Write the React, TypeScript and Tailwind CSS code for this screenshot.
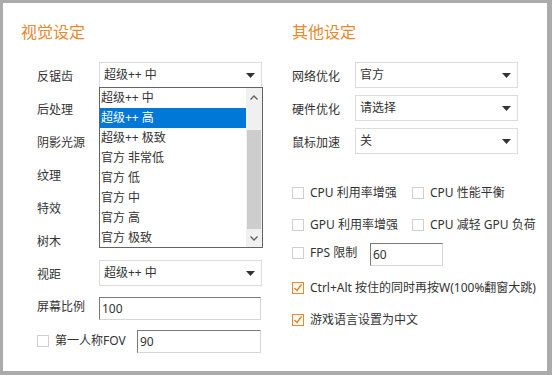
import React from 'react';

const font = { fontFamily: '"Noto Sans", "Noto Sans CJK SC", sans-serif' };

function Arrow() {
  return (
    <svg width="9" height="5" viewBox="0 0 9 5" className="absolute right-[6px] top-[10px]">
      <path d="M0 0 H9 L4.5 5 Z" fill="#333" />
    </svg>
  );
}

function Select({ value }: { value: string }) {
  return (
    <div className="relative h-[26px] w-[163px] border border-[#dcdcdc] bg-white pl-[4px] text-[12px] leading-[24px] text-[#333]">
      {value}
      <Arrow />
    </div>
  );
}

function TextBox({ value, w }: { value: string; w: string }) {
  return (
    <div
      className={`${w} h-[23px] border border-t-[#7a7a7a] border-l-[#7a7a7a] border-r-[#d6d6d6] border-b-[#d6d6d6] bg-white pl-[2px] text-[12px] leading-[22px] text-[#333]`}
    >
      {value}
    </div>
  );
}

function Check({ checked }: { checked?: boolean }) {
  return (
    <span
      className={`flex h-[12px] w-[12px] shrink-0 items-center justify-center border bg-white ${
        checked ? 'border-[#e8892c]' : 'border-[#cfcfcf]'
      }`}
    >
      {checked && (
        <svg width="10" height="10" viewBox="0 0 10 10">
          <path d="M1.5 5 L4 7.5 L8.5 1.5" fill="none" stroke="#e8892c" strokeWidth="1.6" />
        </svg>
      )}
    </span>
  );
}

function CheckLabel({ text, checked, w }: { text: string; checked?: boolean; w?: string }) {
  return (
    <div className={`flex items-center gap-[6px] ${w ?? ''}`}>
      <Check checked={checked} />
      <span className="whitespace-nowrap text-[12px] text-[#333]">{text}</span>
    </div>
  );
}

const leftRows = ['反锯齿', '后处理', '阴影光源', '纹理', '特效', '树木'];

const options = ['超级++ 中', '超级++ 高', '超级++ 极致', '官方 非常低', '官方 低', '官方 中', '官方 高', '官方 极致'];

function Dropdown() {
  return (
    <div className="absolute left-[78px] top-[29px] z-10 flex h-[161px] w-[164px] border border-[#646464] bg-white">
      <div className="flex-1">
        {options.map((o, i) => (
          <div
            key={o}
            className={`h-[20px] pl-[1px] text-[12px] leading-[20px] ${
              i === 1 ? 'bg-[#0078d7] text-white' : 'text-[#333]'
            }`}
          >
            {o}
          </div>
        ))}
      </div>
      <div className="flex w-[16px] flex-col bg-[#f0f0f0]">
        <div className="flex h-[20px] items-center justify-center">
          <svg width="8" height="5" viewBox="0 0 8 5">
            <path d="M0.5 4.5 L4 1 L7.5 4.5" fill="none" stroke="#606060" strokeWidth="1.3" />
          </svg>
        </div>
        <div className="mx-[1px] mt-[22px] h-[100px] bg-[#cdcdcd]" />
        <div className="mt-auto flex h-[18px] items-center justify-center">
          <svg width="8" height="5" viewBox="0 0 8 5">
            <path d="M0.5 0.5 L4 4 L7.5 0.5" fill="none" stroke="#606060" strokeWidth="1.3" />
          </svg>
        </div>
      </div>
    </div>
  );
}

export default function App() {
  return (
    <div className="h-[375px] w-[552px] bg-[#ababab] pl-[3px] pt-[3px] pr-[5px] pb-[4px]" style={font}>
      <div className="flex h-full w-full bg-white">
        {/* left column */}
        <div className="w-[270px] pl-[18px] pt-[17px]">
          <div className="text-[16px] leading-[24px] text-[#e8892c]">视觉设定</div>
          <div className="relative mt-[14px] pl-[16px]">
            {leftRows.map((l, i) => (
              <div key={l} className="flex h-[33px] items-center">
                <span className="w-[62px] pt-[5px] text-[12px] text-[#333]">{l}</span>
                {i === 0 && <Select value="超级++ 中" />}
              </div>
            ))}
            <Dropdown />
            <div className="flex h-[33px] items-center">
              <span className="w-[62px] pt-[5px] text-[12px] text-[#333]">视距</span>
              <Select value="超级++ 中" />
            </div>
            <div className="flex h-[33px] items-center">
              <span className="w-[62px] pt-[3px] text-[12px] text-[#333]">屏幕比例</span>
              <div className="pt-[5px]">
                <TextBox value="100" w="w-[162px]" />
              </div>
            </div>
            <div className="flex h-[33px] items-center">
              <div className="flex w-[100px] items-center gap-[6px] pt-[4px]">
                <Check />
                <span className="text-[12px] text-[#333]">第一人称FOV</span>
              </div>
              <div className="pt-[6px]">
                <TextBox value="90" w="w-[124px]" />
              </div>
            </div>
          </div>
        </div>
        {/* right column */}
        <div className="flex-1 pl-[19px] pt-[17px]">
          <div className="text-[16px] leading-[24px] text-[#e8892c]">其他设定</div>
          <div className="mt-[14px]">
            {[
              ['网络优化', '官方'],
              ['硬件优化', '请选择'],
              ['鼠标加速', '关'],
            ].map(([l, v]) => (
              <div key={l} className="flex h-[33px] items-center">
                <span className="w-[63px] pt-[5px] text-[12px] text-[#333]">{l}</span>
                <Select value={v} />
              </div>
            ))}
          </div>
          <div className="mt-[20px] flex flex-col">
            <div className="flex h-[32px] items-center">
              <CheckLabel text="CPU 利用率增强" w="w-[120px]" />
              <CheckLabel text="CPU 性能平衡" />
            </div>
            <div className="flex h-[31px] items-center">
              <CheckLabel text="GPU 利用率增强" w="w-[120px]" />
              <CheckLabel text="CPU 减轻 GPU 负荷" />
            </div>
            <div className="flex h-[32px] items-start pt-[3px]">
              <div className="w-[78px] pt-[1px]">
                <CheckLabel text="FPS 限制" />
              </div>
              <TextBox value="60" w="w-[73px]" />
            </div>
            <div className="flex h-[32px] items-center">
              <CheckLabel text="Ctrl+Alt 按住的同时再按W(100%翻窗大跳)" checked />
            </div>
            <div className="flex h-[32px] items-center">
              <CheckLabel text="游戏语言设置为中文" checked />
            </div>
          </div>
        </div>
      </div>
    </div>
  );
}
